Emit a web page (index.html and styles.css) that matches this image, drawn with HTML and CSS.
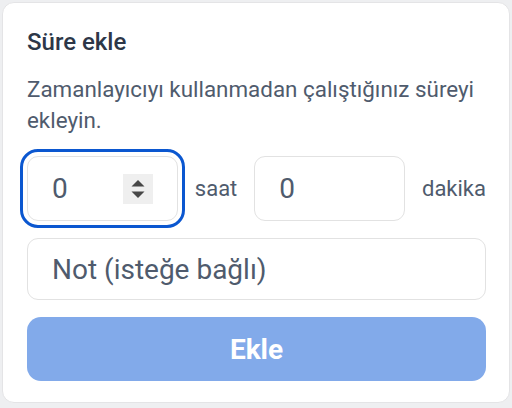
FILE: index.html
```html
<!DOCTYPE html>
<html lang="tr">

<head>
    <meta charset="UTF-8">
    <meta name="viewport" content="width=device-width, initial-scale=1.0">
    <title>Süre ekle</title>
    <link rel="stylesheet" href="styles.css">
</head>

<body>
    <div class="card">
        <h2 class="card-title">Süre ekle</h2>
        <p class="card-text">Zamanlayıcıyı kullanmadan çalıştığınız süreyi ekleyin.</p>

        <div class="time-row">
            <div class="field field-focus">
                <input class="field-input" type="text" value="0">
                <span class="spinner">
                    <svg width="14" height="20" viewBox="0 0 14 20">
                        <path d="M7 1 L13.5 7.5 L0.5 7.5 Z" fill="#474747"/>
                        <path d="M0.5 12.5 L13.5 12.5 L7 19 Z" fill="#474747"/>
                    </svg>
                </span>
            </div>
            <span class="unit">saat</span>
            <div class="field">
                <input class="field-input" type="text" value="0">
            </div>
            <span class="unit">dakika</span>
        </div>

        <div class="field note">
            <input class="field-input" type="text" placeholder="Not (isteğe bağlı)">
        </div>

        <button class="btn-add" disabled>Ekle</button>
    </div>
</body>

</html>
```

FILE: styles.css
```css
body {
    margin: 0;
    padding: 2px;
    background: #eeeff1;
    font-family: Roboto, "Noto Sans", Arial, sans-serif;
}

/* 卡片 */
.card {
    box-sizing: border-box;
    height: 401px;
    background: #fff;
    border: 1px solid #e4e4e6;
    border-radius: 12px;
    padding: 25px 23px 21px 24px;
}

.card-title {
    margin: 0;
    font-size: 24px;
    line-height: 28px;
    font-weight: 500;
    color: #2d3748;
}

.card-text {
    margin: 18px 0 20px 0;
    font-size: 22.4px;
    line-height: 31px;
    color: #4f5b6d;
}

/* 时间输入行 */
.time-row {
    display: flex;
    align-items: center;
    justify-content: space-between;
}

.field {
    box-sizing: border-box;
    display: flex;
    align-items: center;
    width: 151px;
    height: 65px;
    border: 1px solid #e2e2e2;
    border-radius: 11px;
    padding: 0 24px;
    background: #fff;
}

.field-focus {
    outline: 3px solid #0b57d0;
    outline-offset: 4px;
}

.field-input {
    flex: 1;
    min-width: 0;
    border: none;
    outline: none;
    padding: 0;
    font-family: inherit;
    font-size: 28px;
    color: #4f5b6d;
    background: transparent;
}

.field-input::placeholder {
    color: #4f5b6d;
    opacity: 1;
}

.spinner {
    display: flex;
    align-items: center;
    justify-content: center;
    width: 30px;
    height: 30px;
    background: #efefef;
}

.unit {
    font-size: 22px;
    color: #4f5b6d;
}

.note {
    width: auto;
    height: 62px;
    margin-top: 17px;
}

/* 按钮 */
.btn-add {
    display: block;
    width: 100%;
    height: 64px;
    margin-top: 17px;
    border: none;
    border-radius: 14px;
    background: #82aaea;
    color: #fff;
    font-family: inherit;
    font-size: 28px;
    font-weight: 700;
}
```
